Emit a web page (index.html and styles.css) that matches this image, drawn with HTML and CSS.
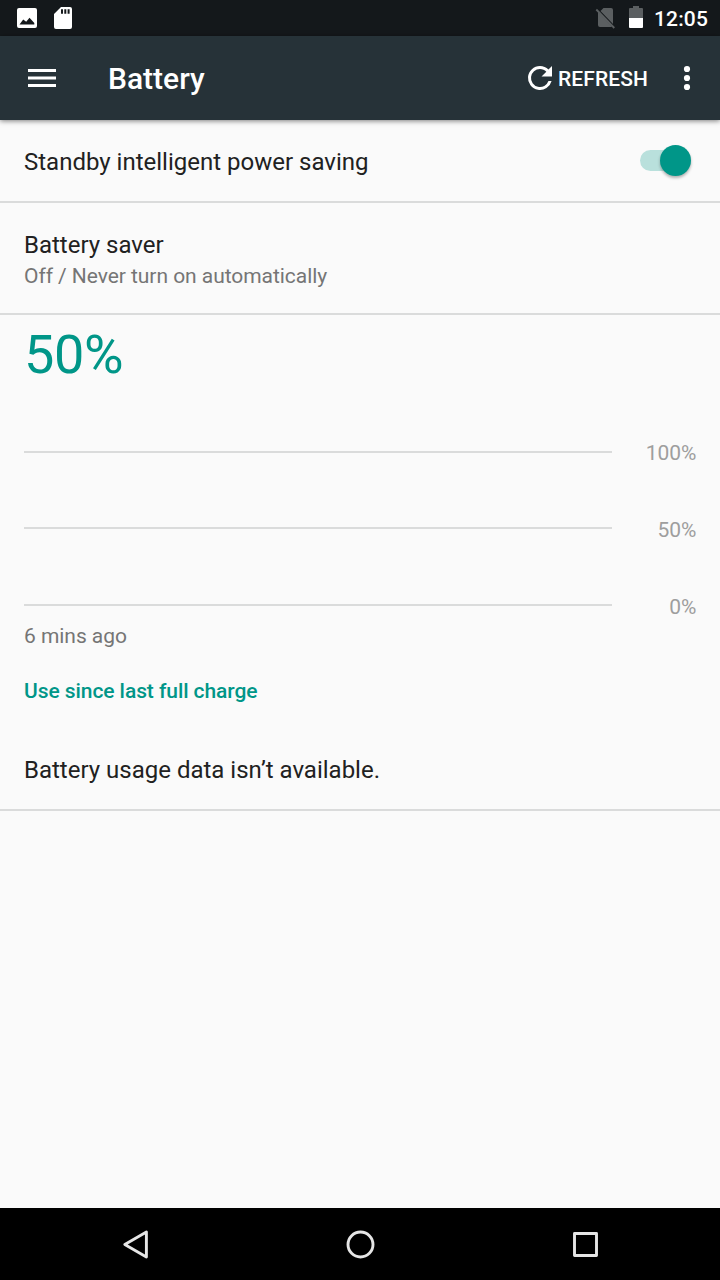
FILE: index.html
```html
<!DOCTYPE html>
<html lang="en">
<head>
<meta charset="utf-8">
<title>Battery</title>
<link rel="stylesheet" href="styles.css">
</head>
<body>
<div class="screen">
  <div class="status-bar">
    <svg class="status-icons" width="80" height="36" viewBox="0 0 80 36">
      <path fill="#fff" fill-rule="evenodd" d="M19 8h16a2 2 0 0 1 2 2v16a2 2 0 0 1-2 2H19a2 2 0 0 1-2-2V10a2 2 0 0 1 2-2zM19.500 24.500h14.800v-1.500l-4.800-5.200-3.300 4-3-2.300z"/>
      <path fill="#fff" fill-rule="evenodd" d="M61 7h9a2 2 0 0 1 2 2v18a2 2 0 0 1-2 2H56a2 2 0 0 1-2-2V14zM61 9.300v4.400h2V9.300zM64.300 9.300v4.400h2V9.300zM67.600 9.300v4.400h2V9.300z"/>
    </svg>
    <div class="status-right">
      <svg width="60" height="36" viewBox="590 0 60 36">
        <path fill="#5b5f61" d="M603.500 8H611a2 2 0 0 1 2 2v14L600.500 11zM598 12L612 26.500L611 27H600a2 2 0 0 1-2-2z"/>
        <path stroke="#5b5f61" stroke-width="1.800" d="M596.300 9.500L614.300 28"/>
        <path fill="#5b5f61" d="M633 6h6v2h3a1 1 0 0 1 1 1v9h-14V9a1 1 0 0 1 1-1h3z"/>
        <path fill="#fff" d="M629 18h14v9a1 1 0 0 1-1 1h-12a1 1 0 0 1-1-1z"/>
      </svg>
      <span class="clock">12:05</span>
    </div>
  </div>
  <header class="app-bar">
    <svg class="menu" width="28" height="18" viewBox="0 0 28 18">
      <path fill="#fff" d="M0 0h28v3H0zM0 7.500h28v3H0zM0 15h28v3H0z"/>
    </svg>
    <h1 class="title">Battery</h1>
    <div class="refresh">
      <svg width="36" height="36" viewBox="0 0 24 24"><path fill="#fff" d="M17.650 6.350A7.960 7.960 0 0 0 12 4a8 8 0 1 0 7.730 10h-2.080A6 6 0 1 1 12 6c1.660 0 3.140.690 4.220 1.780L13 11h7V4z"/></svg>
      <span>REFRESH</span>
    </div>
    <svg class="more" width="36" height="36" viewBox="0 0 36 36">
      <g fill="#fff"><circle cx="18" cy="9" r="3.100"/><circle cx="18" cy="18" r="3.100"/><circle cx="18" cy="27" r="3.100"/></g>
    </svg>
  </header>
  <main class="content">
    <section class="row standby">
      <span class="primary">Standby intelligent power saving</span>
      <div class="toggle"><div class="thumb"></div></div>
    </section>
    <section class="row saver">
      <div class="primary">Battery saver</div>
      <div class="secondary">Off / Never turn on automatically</div>
    </section>
    <section class="row usage">
      <div class="level">50%</div>
      <div class="chart">
        <div class="grid-row"><div class="line"></div><span>100%</span></div>
        <div class="grid-row middle"><div class="line"></div><span>50%</span></div>
        <div class="grid-row bottom"><div class="line"></div><span>0%</span></div>
      </div>
      <div class="secondary since">6 mins ago</div>
      <div class="category">Use since last full charge</div>
      <div class="primary empty">Battery usage data isn’t available.</div>
    </section>
  </main>
  <nav class="nav-bar">
    <svg width="720" height="72" viewBox="0 1208 720 72">
      <g fill="none" stroke="#e6e6e6" stroke-width="2.900" stroke-linejoin="round">
        <path d="M124.800 1244.500L146.400 1232v25z"/>
        <circle cx="360.500" cy="1244.500" r="12.500"/>
        <rect x="574.500" y="1233.500" width="22" height="22"/>
      </g>
    </svg>
  </nav>
</div>
</body>
</html>
```
FILE: styles.css
```css
* { box-sizing: border-box; }
body { margin: 0; font-family: Roboto, sans-serif; background: #fafafa; }
svg { display: block; flex: none; }
.screen { width: 720px; height: 1280px; display: flex; flex-direction: column; overflow: hidden; }
.status-bar { height: 36px; background: #14181b; display: flex; justify-content: space-between; flex: none; }
.status-right { display: flex; width: 130px; gap: 4px; }
.clock { color: #fff; font-size: 21px; font-weight: 500; line-height: 38px; letter-spacing: .15px; }
.app-bar { height: 84px; flex: none; background: #263238; display: flex; align-items: center; padding: 0 15px 0 28px; box-shadow: 0 1px 5px rgba(0,0,0,.5); z-index: 1; }
.title { margin: 0 0 0 52px; flex: 1; color: #fff; font-size: 30px; font-weight: 500; line-height: 36px; padding-top: 2px; }
.refresh { display: flex; align-items: center; width: 126px; color: #fff; font-size: 21px; font-weight: 500; line-height: 26px; letter-spacing: .1px; margin-right: 21px; }
.refresh span { padding-top: 1px; }
.content { flex: 1; }
.row { border-bottom: 2px solid #dadbdb; padding: 0 24px; }
.primary { font-size: 24px; line-height: 32px; color: #212121; }
.secondary { font-size: 21px; line-height: 28px; color: #757575; letter-spacing: -.05px; }
.standby { height: 83px; display: flex; align-items: center; justify-content: space-between; padding-right: 29px; }
.standby .primary { padding-top: 2px; }
.toggle { width: 51px; height: 21px; background: linear-gradient(#b9e0dc, #b9e0dc) left / 46px 21px no-repeat; border-radius: 11px; display: flex; align-items: center; justify-content: flex-end; }
.thumb { width: 31px; height: 31px; flex: none; border-radius: 50%; background: #009688; box-shadow: 0 2px 3px rgba(0,0,0,.3); }
.saver { height: 112px; padding-top: 26px; }
.saver .secondary { margin-top: 1px; }
.usage { height: 496px; }
.level { font-size: 54px; line-height: 64px; padding-top: 8px; color: #009688; letter-spacing: -.3px; }
.chart { padding-top: 51px; height: 231px; }
.grid-row { display: flex; align-items: center; justify-content: space-between; height: 28px; margin-bottom: 48px; color: #9e9e9e; font-size: 21px; line-height: 28px; }
.grid-row span { padding-top: 2px; margin-right: -.5px; }
.grid-row.middle { margin-bottom: 49px; }
.grid-row.middle span, .grid-row.bottom span { padding-top: 4px; }
.line { width: 588px; height: 2px; background: #dadbdb; }
.since { margin-top: 4px; }
.category { margin-top: 27px; font-size: 21px; line-height: 28px; font-weight: 500; color: #009688; letter-spacing: -.07px; }
.empty { margin-top: 49px; }
.nav-bar { height: 72px; background: #000; flex: none; }
```
